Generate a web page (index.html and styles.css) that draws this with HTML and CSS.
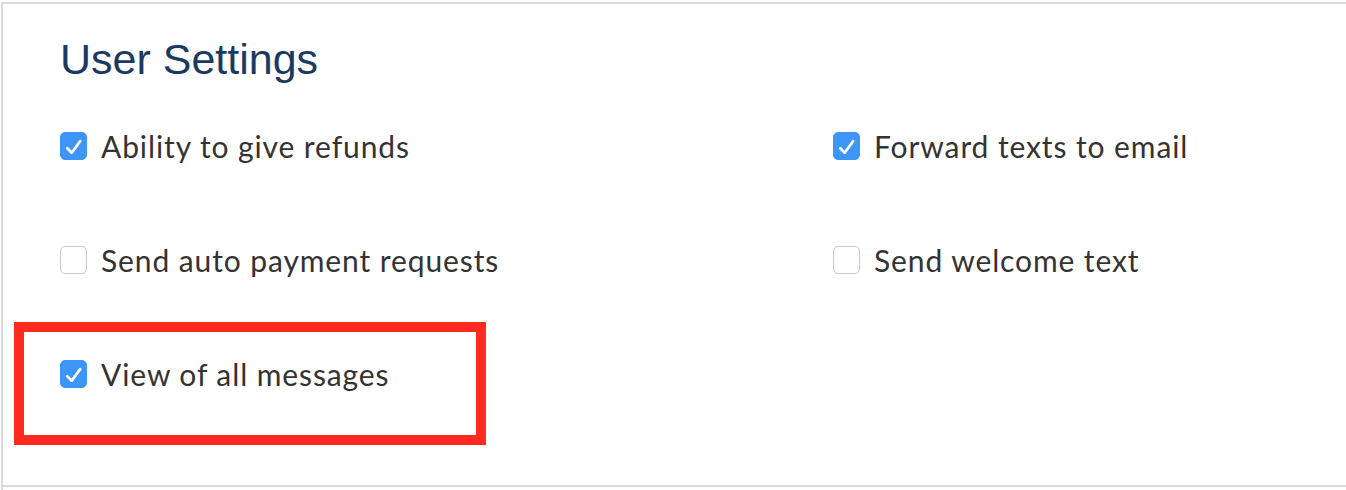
FILE: index.html
```html
<!DOCTYPE html>
<html lang="en">
	<head>
		<meta charset="utf-8">
		<title>User Settings</title>
		<link rel="stylesheet" href="styles.css">
	</head>
	<body>
		<div class="page">
			<div class="panel">
				<h2 class="title">User Settings</h2>
				<ul class="options">
					<li class="option">
						<span class="check on"><svg viewBox="0 0 28 28"><path d="M7 16.5 L12 21.5 L21.5 8.5"/></svg></span>
						<span class="label">Ability to give refunds</span>
					</li>
					<li class="option">
						<span class="check on"><svg viewBox="0 0 28 28"><path d="M7 16.5 L12 21.5 L21.5 8.5"/></svg></span>
						<span class="label">Forward texts to email</span>
					</li>
					<li class="option">
						<span class="check"></span>
						<span class="label">Send auto payment requests</span>
					</li>
					<li class="option">
						<span class="check"></span>
						<span class="label">Send welcome text</span>
					</li>
					<li class="option marked">
						<span class="check on"><svg viewBox="0 0 28 28"><path d="M7 16.5 L12 21.5 L21.5 8.5"/></svg></span>
						<span class="label">View of all messages</span>
					</li>
				</ul>
			</div>
		</div>
	</body>
</html>
```
FILE: styles.css
```css
*, *::before, *::after {
  margin: 0;
  padding: 0;
  box-sizing: border-box;
}

body {
  background-color: #fff;
  overflow: hidden;
}

ul {
  list-style: none;
}

.page {
  height: 490px;
  margin-left: 1px;
  border-left: 2px solid #dadada;
}

.panel {
  height: 485px;
  margin-top: 2px;
  padding-left: 57px;
  border-top: 2px solid #dadada;
  border-bottom: 2px solid #dadada;
}

.title {
  margin-top: 34px;
  font-family: "Liberation Sans", Arial, sans-serif;
  font-size: 43px;
  font-weight: normal;
  line-height: 42px;
  color: #1b3a62;
}

.options {
  display: grid;
  grid-template-columns: 773px 1fr;
  row-gap: 86px;
  margin-top: 52px;
}

.option {
  display: flex;
  align-items: center;
  height: 28px;
  position: relative;
}

.check {
  width: 27px;
  height: 28px;
  flex: none;
  border: 1px solid #c9c9c9;
  border-radius: 5px;
  background-color: #fff;
}

.check.on {
  border-color: #3d96f6;
  background-color: #3d96f6;
}

.check svg {
  display: block;
  width: 25px;
  height: 26px;
}

.check path {
  fill: none;
  stroke: #fff;
  stroke-width: 3;
  stroke-linecap: round;
  stroke-linejoin: round;
}

.label {
  margin-left: 14px;
  font-family: Lato, "Liberation Sans", sans-serif;
  font-size: 30px;
  letter-spacing: 0.9px;
  line-height: 28px;
  color: #333;
  white-space: nowrap;
}

.marked::after {
  content: "";
  position: absolute;
  left: -46px;
  top: -38px;
  width: 472px;
  height: 123px;
  border: 10px solid #ff2a20;
}
```
